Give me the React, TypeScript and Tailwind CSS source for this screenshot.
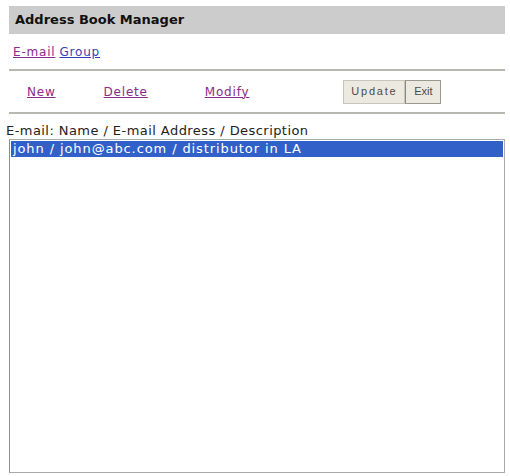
import React from "react"

const font = { fontFamily: '"DejaVu Sans", Verdana, sans-serif' }

export default function App() {
  return (
    <div
      className="flex h-[476px] w-[510px] flex-col bg-white pl-[6px] text-[13px] text-[#222]"
      style={font}
    >
      <div className="mt-[6px] ml-[3px] flex h-[28px] w-[496px] items-center bg-[#cccccc] pl-[6px] font-bold text-[#111]">
        Address Book Manager
      </div>
      <div className="ml-[7px] flex h-[35px] items-center gap-[4px] text-[12px] tracking-[0.8px]">
        <a className="text-[#8a2a8a] underline" href="#">
          E-mail
        </a>
        <a className="text-[#3344bb] underline" href="#">
          Group
        </a>
      </div>
      <div className="ml-[3px] h-[2px] w-[496px] bg-[#b8b8b0]" />
      <div className="ml-[3px] flex h-[41px] w-[496px] items-center text-[12px] tracking-[0.8px]">
        <a className="ml-[18px] text-[#8a2a8a] underline" href="#">
          New
        </a>
        <a className="ml-[48px] text-[#8a2a8a] underline" href="#">
          Delete
        </a>
        <a className="ml-[57px] text-[#8a2a8a] underline" href="#">
          Modify
        </a>
        <div
          className="ml-[94px] flex h-[24px] text-[11px] tracking-normal text-[#4a4a4a]"
          style={{ fontFamily: '"Liberation Sans", Arial, sans-serif' }}
        >
          <button className="w-[62px] border border-[#c8c6bc] bg-[#eceae0] tracking-[1.8px]">
            Update
          </button>
          <button className="w-[36px] border border-l-[#8a8880] border-[#9a9890] bg-[#eceae0]">
            Exit
          </button>
        </div>
      </div>
      <div className="ml-[3px] h-[2px] w-[496px] bg-[#b8b8b0]" />
      <div className="mt-[9px] h-[16px] leading-[16px] tracking-[0.44px]">
        E-mail: Name / E-mail Address / Description
      </div>
      <div className="ml-[3px] h-[334px] w-[496px] border border-[#a8aca8] border-l-[#8c908c] bg-white p-[1px]">
        <div className="h-[16px] bg-[#3060c8] pl-[2px] leading-[16px] tracking-[0.9px] text-white">
          john / john@abc.com / distributor in LA
        </div>
      </div>
    </div>
  )
}
